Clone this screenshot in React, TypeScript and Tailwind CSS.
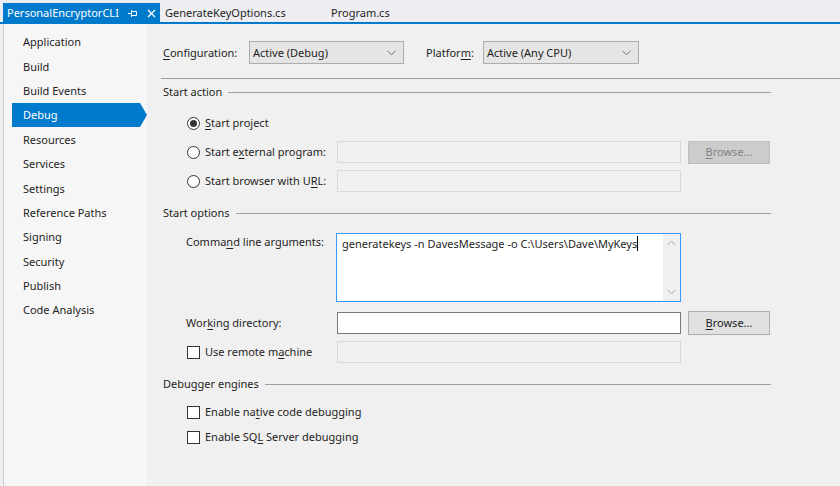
import React from "react";

const U = ({ children }: { children: React.ReactNode }) => <span className="underline underline-offset-2">{children}</span>;

const sideItems = ["Application", "Build", "Build Events", "Debug", "Resources", "Services", "Settings", "Reference Paths", "Signing", "Security", "Publish", "Code Analysis"];

function Chevron({ className = "" }: { className?: string }) {
  return (
    <svg width="9" height="6" viewBox="0 0 9 6" className={className}>
      <path d="M0.5 0.8 L4.5 4.8 L8.5 0.8" fill="none" stroke="currentColor" strokeWidth="1" />
    </svg>
  );
}

function Dropdown({ text, w }: { text: string; w: string }) {
  return (
    <div className={`${w} h-[23px] bg-[#e5e5e5] border border-[#acacac] flex items-center pl-[3px] pr-[7px] shrink-0`}>
      <span className="flex-1">{text}</span>
      <Chevron className="text-[#707070]" />
    </div>
  );
}

function Heading({ children }: { children: React.ReactNode }) {
  return (
    <div className="flex items-center h-[16px] pl-[2px] pr-[69px]">
      <span>{children}</span>
      <div className="flex-1 h-px bg-[#a0a0a0] ml-[6px]" />
    </div>
  );
}

function Radio({ checked }: { checked?: boolean }) {
  return (
    <div className="w-[13px] h-[13px] shrink-0 rounded-full border border-[#333333] bg-white flex items-center justify-center">
      {checked && <div className="w-[7px] h-[7px] rounded-full bg-[#333333]" />}
    </div>
  );
}

function Check() {
  return <div className="w-[13px] h-[13px] shrink-0 border border-[#333333] bg-white" />;
}

const DisabledBox = () => <div className="w-[344px] h-[22px] shrink-0 border border-[#d9d9d9] bg-[#f0f0f0]" />;

export default function App() {
  return (
    <div
      className="w-[840px] h-[486px] bg-[#f0f0f0] text-[#1e1e1e] text-[11px] leading-[16px] overflow-hidden flex flex-col whitespace-nowrap"
      style={{ fontFamily: '"Segoe UI", "Noto Sans", sans-serif' }}
    >
      {/* Tab bar */}
      <div className="h-[22px] bg-[#eeeef2] flex items-end shrink-0">
        <div className="ml-[3px] w-[157px] shrink-0 h-[19px] bg-[#007acc] text-white flex items-center pl-[4px] pt-[1px]">
          <span>PersonalEncryptorCLI</span>
          <svg width="10" height="9" viewBox="0 0 10 9" className="ml-[9px] shrink-0">
            <path d="M0 4.5 H3.5 M3.5 1 V8 M3.5 2.5 H8.5 V6.5 H3.5" fill="none" stroke="white" strokeWidth="1" />
          </svg>
          <svg width="9" height="9" viewBox="0 0 9 9" className="ml-[9px] shrink-0">
            <path d="M1 1 L8 8 M8 1 L1 8" stroke="white" strokeWidth="1.3" />
          </svg>
        </div>
        <div className="h-[19px] flex items-center pl-[5px] pt-[1px] w-[171px] shrink-0">GenerateKeyOptions.cs</div>
        <div className="h-[19px] flex items-center pt-[1px]">Program.cs</div>
      </div>
      <div className="h-[2px] bg-[#007acc] shrink-0" />

      <div className="flex flex-1 min-h-0">
        {/* Sidebar */}
        <div className="w-[147px] flex shrink-0">
          <div className="w-[3px]" />
          <div className="w-px bg-[#cccedb]" />
          <div className="flex-1 bg-[#f6f6f6] pt-[6px] pl-[8px]">
            {sideItems.map((s) => (
              <div key={s} className="relative h-[24.4px] flex items-center">
                {s === "Debug" ? (
                  <>
                    <div className="w-[128px] h-[24px] bg-[#007acc] text-white flex items-center pl-[11px]">{s}</div>
                    <div className="absolute left-[128px] top-[0px] w-0 h-0 border-y-[12px] border-y-transparent border-l-[7px] border-l-[#007acc]" />
                  </>
                ) : (
                  <div className="pl-[11px]">{s}</div>
                )}
              </div>
            ))}
          </div>
        </div>

        {/* Main */}
        <div className="flex-1 pl-[14px] flex flex-col">
          <div className="flex items-center h-[23px] mt-[17px] pl-[2px]">
            <span className="w-[86px] shrink-0">
              <U>C</U>onfiguration:
            </span>
            <Dropdown text="Active (Debug)" w="w-[155px]" />
            <span className="w-[57px] ml-[22px] shrink-0">
              Platfor<U>m</U>:
            </span>
            <Dropdown text="Active (Any CPU)" w="w-[156px]" />
          </div>
          <div className="h-px bg-[#a0a0a0] mt-[14px]" />

          <div className="mt-[5px]">
            <Heading>Start action</Heading>
          </div>

          <div className="pl-[26px] mt-[12px] flex flex-col gap-[7px]">
            <div className="flex items-center h-[22px]">
              <div className="w-[150px] shrink-0 flex items-center">
                <Radio checked />
                <span className="ml-[5px]">
                  <U>S</U>tart project
                </span>
              </div>
            </div>
            <div className="flex items-center h-[22px]">
              <div className="w-[150px] shrink-0 flex items-center">
                <Radio />
                <span className="ml-[5px]">
                  Start e<U>x</U>ternal program:
                </span>
              </div>
              <DisabledBox />
              <div className="ml-[7px] w-[82px] shrink-0 h-[23px] bg-[#cccccc] border border-[#bfbfbf] text-[#838383] flex items-center justify-center">
                <span>
                  <U>B</U>rowse...
                </span>
              </div>
            </div>
            <div className="flex items-center h-[22px]">
              <div className="w-[150px] shrink-0 flex items-center">
                <Radio />
                <span className="ml-[5px]">
                  Start browser with U<U>R</U>L:
                </span>
              </div>
              <DisabledBox />
            </div>
          </div>

          <div className="mt-[13px]">
            <Heading>Start options</Heading>
          </div>

          <div className="pl-[25px] mt-[12px] flex">
            <div className="w-[150px] shrink-0 pt-[1px]">
              Comma<U>n</U>d line arguments:
            </div>
            <div className="w-[345px] shrink-0 h-[69px] bg-white border border-[#3399ff] flex">
              <div className="flex-1 pl-[5px] pt-[2px] flex items-start">
                <span>generatekeys -n DavesMessage -o C:\Users\Dave\MyKeys</span>
                <span className="inline-block w-px h-[15px] bg-black" />
              </div>
              <div className="w-[17px] bg-[#f0f0f0] flex flex-col items-center justify-between py-[6px] text-[#a8a8a8]">
                <Chevron className="rotate-180" />
                <Chevron />
              </div>
            </div>
          </div>

          <div className="pl-[25px] mt-[10px] flex items-center h-[22px]">
            <div className="w-[151px] shrink-0">
              Wor<U>k</U>ing directory:
            </div>
            <div className="w-[344px] shrink-0 h-[22px] bg-white border border-[#7a7a7a]" />
            <div className="ml-[7px] w-[82px] shrink-0 h-[24px] bg-[#e1e1e1] border border-[#adadad] flex items-center justify-center">
              <span>
                <U>B</U>rowse...
              </span>
            </div>
          </div>

          <div className="pl-[26px] mt-[7px] flex items-center h-[22px]">
            <div className="w-[150px] shrink-0 flex items-center">
              <Check />
              <span className="ml-[5px]">
                Use remote m<U>a</U>chine
              </span>
            </div>
            <DisabledBox />
          </div>

          <div className="mt-[13px]">
            <Heading>Debugger engines</Heading>
          </div>

          <div className="pl-[26px] mt-[9px] flex flex-col gap-[3px]">
            <div className="flex items-center h-[22px]">
              <Check />
              <span className="ml-[5px]">
                Enable na<U>t</U>ive code debugging
              </span>
            </div>
            <div className="flex items-center h-[22px]">
              <Check />
              <span className="ml-[5px]">
                Enable SQ<U>L</U> Server debugging
              </span>
            </div>
          </div>
        </div>
      </div>
    </div>
  );
}
